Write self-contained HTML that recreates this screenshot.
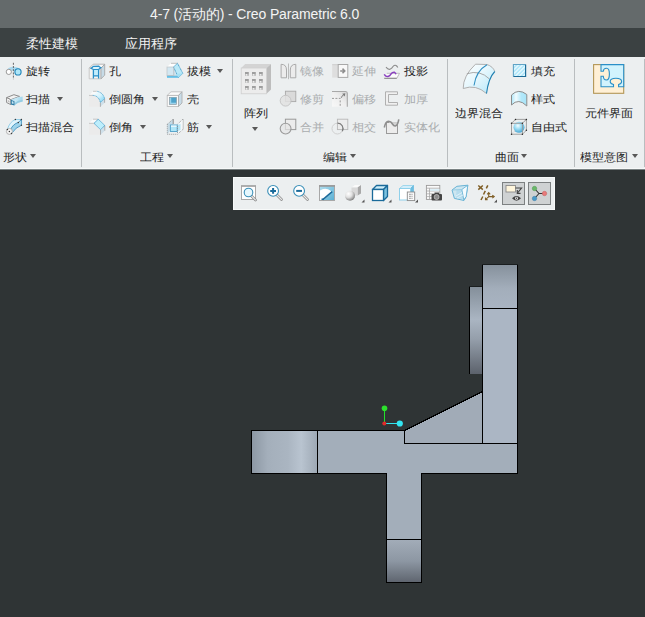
<!DOCTYPE html>
<html><head><meta charset="utf-8">
<style>
*{margin:0;padding:0;box-sizing:border-box}
html,body{width:645px;height:617px;overflow:hidden;background:#2f3435;font-family:"Liberation Sans",sans-serif;position:relative}
.a{position:absolute;white-space:nowrap}
#title{left:0;top:0;width:645px;height:28px;background:#646a6b}
#menu{left:0;top:28px;width:645px;height:29px;background:#3b4142}
#ribbon{left:0;top:57px;width:645px;height:112px;background:#eceff0}
.t{font-size:12px;color:#222;line-height:14px;font-weight:500;transform:scaleY(0.91);transform-origin:0 12.5px}
.d{color:#a9acae}
.sep{position:absolute;width:1px;background:#b9bdbf;top:59px;height:108px}
.arr{position:absolute;width:0;height:0;border-left:3.8px solid transparent;border-right:3.8px solid transparent;border-top:4.6px solid #585858}
.mt{font-size:13px;color:#f2f2f2;line-height:15px;font-weight:500}
</style></head><body>
<div class="a" id="title"></div>
<div class="a" style="left:150px;top:6px;font-size:14px;color:#f4f4f4;line-height:16px;letter-spacing:-0.13px">4-7 (活动的) - Creo Parametric 6.0</div>
<div class="a" id="menu"></div>
<div class="a mt" style="left:26px;top:36px">柔性建模</div>
<div class="a mt" style="left:125px;top:36px">应用程序</div>
<div class="a" id="ribbon"></div>
<div class="a" style="left:0;top:168px;width:645px;height:1px;background:#f6f8f8"></div>
<div class="a" style="left:0;top:169px;width:645px;height:1px;background:#7a8283"></div>

<!-- separators -->
<div class="sep" style="left:81px"></div>
<div class="sep" style="left:232px"></div>
<div class="sep" style="left:447px"></div>
<div class="sep" style="left:574px"></div>
<div class="sep" style="left:644px"></div>

<!-- 形状 -->
<div class="a t" style="left:26px;top:64px">旋转</div>
<div class="a t" style="left:26px;top:92px">扫描</div>
<div class="arr" style="left:57px;top:97px"></div>
<div class="a t" style="left:26px;top:120px">扫描混合</div>
<div class="a t" style="left:3px;top:150px">形状</div>
<div class="arr" style="left:30px;top:154px"></div>

<!-- 工程 -->
<div class="a t" style="left:109px;top:64px">孔</div>
<div class="a t" style="left:109px;top:92px">倒圆角</div>
<div class="arr" style="left:152px;top:97px"></div>
<div class="a t" style="left:109px;top:120px">倒角</div>
<div class="arr" style="left:140px;top:125px"></div>
<div class="a t" style="left:187px;top:64px">拔模</div>
<div class="arr" style="left:217px;top:69px"></div>
<div class="a t" style="left:187px;top:92px">壳</div>
<div class="a t" style="left:187px;top:120px">筋</div>
<div class="arr" style="left:206px;top:125px"></div>
<div class="a t" style="left:140px;top:150px">工程</div>
<div class="arr" style="left:167px;top:154px"></div>

<!-- 编辑 -->
<div class="a t" style="left:244px;top:106px">阵列</div>
<div class="arr" style="left:252px;top:127px"></div>
<div class="a t d" style="left:300px;top:64px">镜像</div>
<div class="a t d" style="left:300px;top:92px">修剪</div>
<div class="a t d" style="left:300px;top:120px">合并</div>
<div class="a t d" style="left:352px;top:64px">延伸</div>
<div class="a t d" style="left:352px;top:92px">偏移</div>
<div class="a t d" style="left:352px;top:120px">相交</div>
<div class="a t" style="left:404px;top:64px">投影</div>
<div class="a t d" style="left:404px;top:92px">加厚</div>
<div class="a t d" style="left:404px;top:120px">实体化</div>
<div class="a t" style="left:323px;top:150px">编辑</div>
<div class="arr" style="left:350px;top:154px"></div>

<!-- 曲面 -->
<div class="a t" style="left:455px;top:106px">边界混合</div>
<div class="a t" style="left:531px;top:64px">填充</div>
<div class="a t" style="left:531px;top:92px">样式</div>
<div class="a t" style="left:531px;top:120px">自由式</div>
<div class="a t" style="left:495px;top:150px">曲面</div>
<div class="arr" style="left:521px;top:154px"></div>

<!-- 模型意图 -->
<div class="a t" style="left:585px;top:106px">元件界面</div>
<div class="a t" style="left:580px;top:150px">模型意图</div>
<div class="arr" style="left:632px;top:154px"></div>


<!-- ICONS shape group -->
<svg class="a" style="left:2px;top:60px" width="24" height="24" viewBox="0 0 24 24">
<path d="M4.8 10.5 Q6 7 11.4 6.8 Q17 7 18.8 10.5 L17 12 Q11.4 9 6 12 Z" fill="#aad8ee"/>
<circle cx="6.8" cy="11.9" r="2.6" fill="#fff" stroke="#9a9a9a" stroke-width="1"/>
<circle cx="16" cy="11.9" r="3.1" fill="#aee6f8" stroke="#1f84b8" stroke-width="1.1"/>
<line x1="11.4" y1="2.8" x2="11.4" y2="19.2" stroke="#5a5a5a" stroke-width="0.9" stroke-dasharray="2,1.2"/>
</svg>
<svg class="a" style="left:2px;top:88px" width="24" height="24" viewBox="-0.6 -0.6 24 24">
<defs><linearGradient id="gSwp" x1="0" y1="0" x2="1" y2="0"><stop offset="0" stop-color="#c8ecf8"/><stop offset="1" stop-color="#a2d6ec"/></linearGradient></defs>
<polygon points="4,9 11.3,6.1 16.9,7.8 8.2,11.1" fill="#f2f2f2" stroke="#8c8c8c" stroke-width="1" stroke-linejoin="round"/>
<polygon points="4,9 8.2,11.1 8.2,16 4,13.9" fill="#fafafa" stroke="#8c8c8c" stroke-width="1" stroke-linejoin="round"/>
<polygon points="5.2,11.3 7,12.2 7,14.2 5.2,13.3" fill="#bdbdbd"/>
<path d="M11.9 12.6 Q15 9 17 8.5 Q19 8 20 7.8 L20 12.9 Q15 13.5 11.9 16.6 Z" fill="url(#gSwp)"/>
<path d="M11.9 14.5 Q15.5 11.5 20 11.2 L20 12.9 Q15 13.5 11.9 16.6 Z" fill="#94cbe2"/>
<path d="M8.2 11.1 L11.9 12.6 Q15 9 16.9 7.8" fill="#bfe6f6"/>
<polygon points="8.2,11.1 11.9,12.6 11.9,16.8 8.2,16" fill="#2c7ba6"/>
<polygon points="9.2,12.5 10.9,13.2 10.9,15.5 9.2,14.9" fill="#c8e6f2"/>
</svg>
<svg class="a" style="left:2px;top:116px" width="24" height="24" viewBox="0 0 24 24">
<path d="M5.4 13.4 Q7.5 6 13.4 3.5 L19.4 3.5 L16.3 6.5 Q11 8 8.6 13.6 Z" fill="#e2f5fc"/>
<path d="M5.4 13.4 Q7.5 6 13.4 3.5 L19.4 3.5" fill="none" stroke="#8ccbe6" stroke-width="0.9"/>
<polygon points="16.3,6.5 19.4,3.5 19.4,9.3" fill="#b8e3f4"/>
<path d="M8.6 13.6 Q11 8 16.3 6.5 L19.4 9.3 Q14 11 9.5 17.5 Z" fill="#9ed3ea"/>
<path d="M8.6 13.6 Q11 8 16.3 6.5 L19.4 3.5 V9.3 Q14 11 9.5 17.5" fill="none" stroke="#3f93c0" stroke-width="0.9"/>
<circle cx="7.4" cy="15.4" r="3" fill="#f6f6f6" stroke="#b4b4b4" stroke-width="1"/>
<g fill="#3a3a3a"><circle cx="13.4" cy="3.5" r="0.75"/><circle cx="19.4" cy="3.5" r="0.75"/><circle cx="19.4" cy="9.3" r="0.75"/><circle cx="16.3" cy="6.5" r="0.75"/><circle cx="5.4" cy="13.4" r="0.75"/><circle cx="9.5" cy="17.5" r="0.75"/><circle cx="7.4" cy="15.4" r="0.75"/></g>
</svg>
<!-- eng group -->
<svg class="a" style="left:86px;top:60px" width="24" height="24" viewBox="0 0 24 24">
<polygon points="3.2,8.2 7.2,4.2 18.7,4.2 15,8.2" fill="#fafafa" stroke="#b0b0b0" stroke-width="0.9"/>
<polygon points="3.2,8.2 15,8.2 15,18.8 3.2,18.8" fill="#f6f4f2" stroke="#c4c4c4" stroke-width="0.9"/>
<polygon points="15,8.2 18.7,4.2 18.7,15.2 15,18.8" fill="#c6dbe7" stroke="#a8a8a8" stroke-width="0.9"/>
<rect x="7.6" y="9.6" width="4.8" height="6.4" fill="#c4eefc"/>
<path d="M7.4 9.5 L7.4 18.6 M12.6 9.5 L12.6 18.6 M7.4 15.8 L12.6 15.8" stroke="#2a8fc8" stroke-width="1.3" fill="none"/>
<path d="M4.8 8.2 Q6.5 7.6 7.2 6.4 L13 6.2 Q13.6 7.4 15 7.6 L12.6 9.5 L7.4 9.5 Z" fill="#d8f4fd" stroke="#2a8fc8" stroke-width="1.2" stroke-linejoin="round"/>
</svg>
<svg class="a" style="left:86px;top:88px" width="24" height="24" viewBox="0 0 24 24">
<rect x="3" y="7.4" width="11.5" height="11.4" fill="#ebebeb"/>
<polygon points="3,7.4 7,3.3 13,3.3 7.5,7.4" fill="#fafafa"/>
<line x1="3" y1="7.4" x2="7" y2="7.4" stroke="#c0c0c0" stroke-width="0.9"/>
<line x1="7" y1="3.3" x2="11" y2="3.3" stroke="#c0c0c0" stroke-width="0.9"/>
<polygon points="14.4,14.5 18.6,10.6 18.6,14.8 14.4,18.8" fill="#cfe0ea"/>
<path d="M14.4 14.6 L14.4 18.8 M18.6 10.8 L18.6 14.8" stroke="#a8a8a8" stroke-width="0.9"/>
<defs><linearGradient id="gFil" x1="0" y1="0" x2="1" y2="1"><stop offset="0" stop-color="#ffffff"/><stop offset="0.5" stop-color="#d6f3fd"/><stop offset="1" stop-color="#6fcdf2"/></linearGradient></defs>
<path d="M6.8 7.4 Q12.6 7.6 14.4 14.5 L18.6 10.6 Q17 4.6 11 3.3 Z" fill="url(#gFil)"/>
<path d="M6.8 7.4 Q12.6 7.6 14.4 14.5 L18.6 10.6 Q17 4.6 11 3.3" fill="none" stroke="#3b9ac8" stroke-width="0.9" stroke-dasharray="1,0.6"/>
</svg>
<svg class="a" style="left:86px;top:116px" width="24" height="24" viewBox="0 0 24 24">
<rect x="3" y="7.3" width="11.5" height="11.5" fill="#ebebeb"/>
<polygon points="3,7.3 7,3.2 12.3,3.2 8,7.3" fill="#fafafa"/>
<line x1="3" y1="7.3" x2="8" y2="7.3" stroke="#c0c0c0" stroke-width="0.9"/>
<line x1="7" y1="3.2" x2="12" y2="3.2" stroke="#c0c0c0" stroke-width="0.9"/>
<polygon points="14.5,13.6 18.8,9.5 18.8,14.7 14.5,18.8" fill="#cfe0ea"/>
<path d="M14.5 13.8 L14.5 18.8 M18.8 9.6 L18.8 14.7" stroke="#a8a8a8" stroke-width="0.9"/>
<polygon points="8,7.3 12.3,3.2 18.8,9.5 14.5,13.6" fill="#bdeefc" stroke="#2f8fc2" stroke-width="0.9" stroke-dasharray="1,0.5"/>
</svg>
<svg class="a" style="left:163px;top:60px" width="24" height="24" viewBox="0 0 24 24">
<polygon points="4,7 8,3.3 14.5,3.3 10.5,7" fill="#ffffff"/>
<line x1="8" y1="3.3" x2="14.5" y2="3.3" stroke="#b8b8b8" stroke-width="0.9"/>
<rect x="4" y="7" width="10" height="9" fill="#d3e7f1" stroke="#c0c8cc" stroke-width="0.8"/>
<rect x="4" y="15.8" width="11.5" height="2" fill="#62bfe6"/>
<polygon points="10.5,7 14.5,3.3 19.8,13.3 15.5,17.6" fill="#b9e9f8" stroke="#2f8fc2" stroke-width="0.9" stroke-dasharray="1,0.5"/>
<polygon points="12.5,14 19.8,13.3 15.5,17.6" fill="#a4e0f4"/>
<path d="M10.8 7.5 V15.5 H4" stroke="#b8c0c4" stroke-width="0.9" fill="none"/>
</svg>
<svg class="a" style="left:163px;top:88px" width="24" height="24" viewBox="0 0 24 24">
<polygon points="4.2,7.4 8,3.8 19,3.8 15.5,7.4" fill="#fbfbfb" stroke="#b8b8b8" stroke-width="0.8"/>
<rect x="4.2" y="7.4" width="11.3" height="11" fill="#fafafa" stroke="#b8b8b8" stroke-width="0.8"/>
<polygon points="15.5,7.4 19,3.8 19,15 15.5,18.4" fill="#c8dce8" stroke="#a8a8a8" stroke-width="0.8"/>
<rect x="6.4" y="9.4" width="7" height="7" fill="#9bd3ec" stroke="#8a9aa2" stroke-width="0.7"/>
<rect x="8.2" y="9.7" width="5" height="5" fill="#4ea3cb"/>
</svg>
<svg class="a" style="left:163px;top:114px" width="24" height="24" viewBox="0 0 24 24">
<polygon points="4.3,10.3 10.2,5 10.2,10 5.2,19.5 4.3,20" fill="#c6dbe6"/>
<path d="M10.2 5 V10" stroke="#8a8a8a" stroke-width="1"/>
<path d="M19.8 5 V15.5" stroke="#8a8a8a" stroke-width="1"/>
<polygon points="14.5,10.3 19.8,5.2 19.8,15.5 14.5,20.3" fill="#f4f8fa"/>
<g stroke="#8a8a8a" stroke-width="0.9" fill="none" stroke-dasharray="0.9,1.1">
<path d="M4.3 10.3 L10.2 5"/><path d="M4.3 10.3 V20.3 H14.5"/><path d="M14.5 10.3 L19.8 5.2"/><path d="M14.5 20.3 L19.8 15.5"/>
</g>
<polygon points="14,11 17.5,10 17.5,16 14,17.5" fill="#b6e4f4"/>
<rect x="7.4" y="11" width="6.8" height="6.5" fill="#aee6f8" stroke="#5aa6cc" stroke-width="1"/>
<rect x="8" y="11.5" width="5.6" height="1.3" fill="#f2fbff"/>
<path d="M14.5 12 V20" stroke="#8a8a8a" stroke-width="0.9" stroke-dasharray="0.9,1.1"/>
</svg>
<!-- edit group -->
<svg class="a" style="left:238px;top:60px" width="36" height="36" viewBox="0 0 36 36">
<polygon points="3.2,8 7.2,4.1 33,4.1 28.5,8" fill="#d4d4d4"/>
<polygon points="28.5,8 33,4.1 33,29.6 28.5,33.8" fill="#bdbdbd"/>
<rect x="3.2" y="8" width="25.3" height="25.8" fill="#ececec" stroke="#cfcfcf" stroke-width="0.8"/>
<rect x="7" y="12" width="3.8" height="3.6" fill="#9e9e9e"/><rect x="7" y="14.2" width="3.8" height="1.4" fill="#c4c4c4"/><rect x="7.9" y="14.2" width="1.3" height="1.3" fill="#f8f8f8"/>
<rect x="7" y="19" width="3.8" height="3.6" fill="#9e9e9e"/><rect x="7" y="21.2" width="3.8" height="1.4" fill="#c4c4c4"/><rect x="7.9" y="21.2" width="1.3" height="1.3" fill="#f8f8f8"/>
<rect x="7" y="26" width="3.8" height="3.6" fill="#9e9e9e"/><rect x="7" y="28.2" width="3.8" height="1.4" fill="#c4c4c4"/><rect x="7.9" y="28.2" width="1.3" height="1.3" fill="#f8f8f8"/>
<rect x="14" y="12" width="3.8" height="3.6" fill="#9e9e9e"/><rect x="14" y="14.2" width="3.8" height="1.4" fill="#c4c4c4"/><rect x="14.9" y="14.2" width="1.3" height="1.3" fill="#f8f8f8"/>
<rect x="14" y="19" width="3.8" height="3.6" fill="#9e9e9e"/><rect x="14" y="21.2" width="3.8" height="1.4" fill="#c4c4c4"/><rect x="14.9" y="21.2" width="1.3" height="1.3" fill="#f8f8f8"/>
<rect x="14" y="26" width="3.8" height="3.6" fill="#9e9e9e"/><rect x="14" y="28.2" width="3.8" height="1.4" fill="#c4c4c4"/><rect x="14.9" y="28.2" width="1.3" height="1.3" fill="#f8f8f8"/>
<rect x="21" y="12" width="3.8" height="3.6" fill="#9e9e9e"/><rect x="21" y="14.2" width="3.8" height="1.4" fill="#c4c4c4"/><rect x="21.9" y="14.2" width="1.3" height="1.3" fill="#f8f8f8"/>
<rect x="21" y="19" width="3.8" height="3.6" fill="#9e9e9e"/><rect x="21" y="21.2" width="3.8" height="1.4" fill="#c4c4c4"/><rect x="21.9" y="21.2" width="1.3" height="1.3" fill="#f8f8f8"/>
<rect x="21" y="26" width="3.8" height="3.6" fill="#9e9e9e"/><rect x="21" y="28.2" width="3.8" height="1.4" fill="#c4c4c4"/><rect x="21.9" y="28.2" width="1.3" height="1.3" fill="#f8f8f8"/>
</svg>
<svg class="a" style="left:277px;top:60px" width="24" height="78" viewBox="0 0 24 78">
<path d="M4.1 17.8 V4.3 Q9.5 4.3 9.5 10 V17.8 Z" fill="#ececec" stroke="#aaaaaa" stroke-width="1"/>
<path d="M18.8 17.8 V4.3 Q13.3 4.3 13.3 10 V17.8 Z" fill="#ececec" stroke="#aaaaaa" stroke-width="1"/>
<line x1="11.5" y1="3.5" x2="11.5" y2="19.2" stroke="#b4b4b4" stroke-width="0.9"/>
<rect x="8.4" y="31.2" width="10.4" height="10.4" fill="#dadada" stroke="#a8a8a8" stroke-width="0.9"/>
<circle cx="8.6" cy="40.7" r="5.4" fill="#e2e2e2" fill-opacity="0.85" stroke="#c2c2c2" stroke-width="0.9"/>
<rect x="8.4" y="59.2" width="10.4" height="10.4" fill="#ececec" stroke="#999" stroke-width="1"/>
<circle cx="8.6" cy="68.6" r="5.4" fill="#e6e6e6" fill-opacity="0.7" stroke="#9c9c9c" stroke-width="1.1"/>
</svg>
<svg class="a" style="left:329px;top:60px" width="24" height="78" viewBox="0 0 24 78">
<rect x="3.2" y="4.2" width="6" height="13.4" fill="#dedede"/>
<rect x="3.2" y="4.2" width="6" height="1" fill="#cfcfcf"/>
<rect x="9.2" y="4.5" width="9.6" height="12.9" fill="#f8f8f8" stroke="#a8a8a8" stroke-width="1"/>
<path d="M11.2 10.9 H15 M13.5 8.6 L15.8 10.9 L13.5 13.2" stroke="#8e8e8e" stroke-width="1.5" fill="none"/>
<defs><linearGradient id="gOff" x1="0" y1="1" x2="1" y2="0"><stop offset="0" stop-color="#f8f8f8"/><stop offset="0.5" stop-color="#eeeeee"/><stop offset="1" stop-color="#d2d2d2"/></linearGradient></defs>
<path d="M3 31 H16.5 Q18.8 31 18.8 33.5 V46.8 H3 Z" fill="url(#gOff)"/>
<path d="M3 31.5 H16.5 Q18.3 31.5 18.3 33.5 V46.8" fill="none" stroke="#a8a8a8" stroke-width="1.1"/>
<path d="M3 38.4 H11.2 V46.8" stroke="#9a9a9a" stroke-width="1" fill="none" stroke-dasharray="2,1.4"/>
<path d="M12 37.5 L15.6 34" stroke="#7a7a7a" stroke-width="1.1" stroke-dasharray="1.2,0.6"/>
<polygon points="13.2,33.8 16.3,33.3 15.8,36.4" fill="#7a7a7a"/>
<rect x="8.4" y="59.2" width="10.4" height="10.4" fill="#ececec" stroke="#b8b8b8" stroke-width="0.9"/>
<circle cx="8.4" cy="68.6" r="5.4" fill="none" stroke="#cccccc" stroke-width="0.9"/>
<path d="M8.4 63.2 A5.4 5.4 0 0 1 13.3 71.3" fill="none" stroke="#7c7c7c" stroke-width="1.2"/>
</svg>
<svg class="a" style="left:381px;top:60px" width="24" height="78" viewBox="0 0 24 78">
<path d="M5 7.2 Q7 9.8 9 9.3 Q11 8.5 12 6.5 Q13.5 4.8 15 5.5 Q16 6 16.8 7.5" fill="none" stroke="#8c8c8c" stroke-width="1.1"/>
<polygon points="5.8,13.3 18.5,13.3 15.8,18.3 3.2,18.3" fill="#fbfbfb"/>
<path d="M5.8 13.3 H18.5 L15.8 18.3" fill="none" stroke="#b0b0b0" stroke-width="0.8"/>
<path d="M3.2 18.3 H15.8" stroke="#8a8a8a" stroke-width="1.2"/>
<path d="M3.2 14.3 Q5 17 7 16.5 Q9 16 10 14 Q11.5 12 13.5 12.3 Q14.5 12.8 15 14.2" fill="none" stroke="#8a3fc0" stroke-width="1.5"/>
<path d="M4.5 31.8 L16.5 31.8 L16.5 34.5 L7.5 34.5 L7.5 42.5 L16.5 42.5 L16.5 45.2 L4.5 45.2 Z" fill="#f0f0f0" stroke="#a8a8a8" stroke-width="0.9"/>
<rect x="5.5" y="62.5" width="11" height="11" fill="#ececec" stroke="#9a9a9a" stroke-width="1"/>
<path d="M8 62.5 H16.5" stroke="#c8c8c8" stroke-width="1"/>
<path d="M11 62.5 Q13 65.5 15 65 Q16.5 64 16.5 62.5 Z" fill="#d4d4d4"/>
<path d="M3.3 67.5 Q4.5 61.5 7.5 61.3 Q10 61.3 11.5 64 Q13 66.5 14.8 65.8 Q16.8 65 17.8 59.3" fill="none" stroke="#8e8e8e" stroke-width="1.6"/>
</svg>
<!-- surface group -->
<svg class="a" style="left:455px;top:58px" width="50" height="42" viewBox="0 0 50 42">
<defs><linearGradient id="gBnd" x1="0" y1="0" x2="1" y2="1"><stop offset="0" stop-color="#ffffff"/><stop offset="0.45" stop-color="#e6f7fd"/><stop offset="1" stop-color="#b2e6f9"/></linearGradient></defs>
<path d="M8.2 30.5 Q8 18 20.5 6.2 L32 6.5 Q38 8.5 39.8 13.5 Q33.5 20 31.5 35.5 Q21 26 8.2 30.5 Z" fill="url(#gBnd)"/>
<path d="M8.2 30.5 Q8 18 20.5 6.2 L32 6.5 Q38 8.5 39.8 13.5" fill="none" stroke="#a8a8a8" stroke-width="0.9"/>
<path d="M8.2 30.5 Q21 26 31.5 35.5" fill="none" stroke="#a8a8a8" stroke-width="0.9"/>
<path d="M11.8 15.8 Q25 11.5 34.5 21" fill="none" stroke="#a0a0a0" stroke-width="0.9"/>
<path d="M19 27.5 Q21 13 32 6.8" fill="none" stroke="#2f8fc2" stroke-width="1.1"/>
<path d="M31.5 35.5 Q33.5 20 39.8 13.5" fill="none" stroke="#1f7fb0" stroke-width="1.1"/>
</svg>
<svg class="a" style="left:507px;top:60px" width="24" height="78" viewBox="0 0 24 78">
<defs><pattern id="stripe" width="2.8" height="2.8" patternUnits="userSpaceOnUse" patternTransform="rotate(45)"><rect width="2.8" height="2.8" fill="#b2e8fa"/><rect width="1" height="2.8" fill="#f6fcff"/></pattern>
<linearGradient id="gSty" x1="0" y1="0" x2="1" y2="0"><stop offset="0" stop-color="#aee6f8"/><stop offset="0.3" stop-color="#f2fcff"/><stop offset="0.65" stop-color="#b2e8fa"/><stop offset="1" stop-color="#a8e4f8"/></linearGradient>
<radialGradient id="gBall" cx="0.4" cy="0.35" r="0.7"><stop offset="0" stop-color="#f4fcff"/><stop offset="0.45" stop-color="#9adcf4"/><stop offset="1" stop-color="#3f9fcc"/></radialGradient></defs>
<rect x="6.4" y="4.5" width="12.2" height="12" fill="url(#stripe)"/>
<path d="M6.4 16.5 V4.5 H18.6" fill="none" stroke="#5fa3c6" stroke-width="1.1"/>
<path d="M18.6 4.5 V16.5 H6.4" fill="none" stroke="#1e6c98" stroke-width="1.2"/>
<path d="M4.5 45 L4.5 35 Q11.5 28 19.8 34.5 L19.8 46 Q11.5 37.5 4.5 45 Z" fill="url(#gSty)" stroke="#8c8c8c" stroke-width="1"/>
<circle cx="12" cy="67.3" r="5.5" fill="url(#gBall)"/>
<g stroke="#999" stroke-width="0.9" fill="none">
<polyline points="4.5,63.3 8.5,59.4 19.4,59.4 15.4,63.3"/>
<polyline points="19.4,59.4 19.4,70.3 15.4,74.2"/>
<rect x="4.5" y="63.3" width="10.9" height="10.9"/>
</g>
<path d="M5.5 73 L8.5 70.3" stroke="#aaa" stroke-width="0.7" stroke-dasharray="1,1"/>
<path d="M15.4 63.3 L19.4 59.4" stroke="#aaa" stroke-width="0.7" stroke-dasharray="1,1"/>
<g fill="#2a2a2a"><circle cx="4.5" cy="63.3" r="0.75"/><circle cx="15.4" cy="63.3" r="0.75"/><circle cx="4.5" cy="74.2" r="0.75"/><circle cx="15.4" cy="74.2" r="0.75"/><circle cx="8.5" cy="59.4" r="0.75"/><circle cx="19.4" cy="59.4" r="0.75"/><circle cx="19.4" cy="70.3" r="0.75"/></g>
</svg>
<svg class="a" style="left:588px;top:60px" width="40" height="38" viewBox="0 0 40 38">
<rect x="5.6" y="4.6" width="30.1" height="28.7" fill="#fff0d6" stroke="#b39656" stroke-width="1.1"/>
<path d="M13 4.6 L35.7 4.6 L35.7 26.8 L30.6 26.8 L30.6 24.5 Q33.6 23.5 33.6 21.4 Q33.6 18.3 27.9 18.3 Q22.2 18.3 22.2 21.4 Q22.2 23.5 25.5 24.5 L25.5 26.8 L13 26.8 L13 16.3 L15.3 16.3 Q15.5 20 18.5 20 Q21.4 20 21.4 14 Q21.4 8.2 18.5 8.2 Q15.5 8.2 15.3 11.2 L13 11.2 Z" fill="#d2f3fd" stroke="#2a8fc8" stroke-width="1.1"/>
</svg>

<!-- view toolbar -->
<div class="a" style="left:233px;top:177px;width:322px;height:33px;background:#eceff0;border:1px solid #f7f9f9"></div>
<div class="a" style="left:502px;top:182px;width:23px;height:23px;background:#cfd2d3;border:1px solid #7d8182"></div>
<div class="a" style="left:528px;top:182px;width:23px;height:23px;background:#cfd2d3;border:1px solid #7d8182"></div>


<!-- toolbar icons -->
<svg class="a" style="left:233px;top:177px" width="322" height="33" viewBox="233 177 322 33">
<defs>
<linearGradient id="gRep" x1="0" y1="0" x2="1" y2="1"><stop offset="0" stop-color="#b4e0f0"/><stop offset="1" stop-color="#58aed2"/></linearGradient>
<radialGradient id="gSph" cx="0.35" cy="0.3" r="0.8"><stop offset="0" stop-color="#ffffff"/><stop offset="0.45" stop-color="#e0e0e0"/><stop offset="0.85" stop-color="#8c8c8c"/><stop offset="1" stop-color="#6a6a6a"/></radialGradient>
<linearGradient id="gGlass" x1="0" y1="0" x2="1" y2="1"><stop offset="0" stop-color="#bfe6f4"/><stop offset="1" stop-color="#5fb0d6"/></linearGradient>
</defs>
<!-- refit -->
<rect x="241.5" y="186" width="14" height="13.5" fill="#fff" stroke="#a8a8a8" stroke-width="1"/>
<rect x="241" y="185.3" width="15" height="1.4" fill="#a0a0a0"/>
<line x1="251.5" y1="196" x2="255.5" y2="200" stroke="#8c8c8c" stroke-width="2.6" stroke-linecap="round"/>
<line x1="251.5" y1="196" x2="255.5" y2="200" stroke="#e8e8e8" stroke-width="1.1" stroke-linecap="round"/>
<circle cx="248.5" cy="192.5" r="4.3" fill="#e6f7fd" stroke="#3a8fb8" stroke-width="1.1"/>
<!-- zoom in -->
<line x1="277" y1="195" x2="281.5" y2="199.5" stroke="#8c8c8c" stroke-width="2.6" stroke-linecap="round"/>
<line x1="277" y1="195" x2="281.5" y2="199.5" stroke="#e8e8e8" stroke-width="1.1" stroke-linecap="round"/>
<circle cx="273.1" cy="190.9" r="5.4" fill="#fff" stroke="#3a8fb8" stroke-width="1.1"/>
<path d="M273.1 188 V193.8 M270.2 190.9 H276" stroke="#1a6a9a" stroke-width="2"/>
<!-- zoom out -->
<line x1="303" y1="195" x2="307.5" y2="199.5" stroke="#8c8c8c" stroke-width="2.6" stroke-linecap="round"/>
<line x1="303" y1="195" x2="307.5" y2="199.5" stroke="#e8e8e8" stroke-width="1.1" stroke-linecap="round"/>
<circle cx="299.1" cy="190.9" r="5.4" fill="#fff" stroke="#3a8fb8" stroke-width="1.1"/>
<path d="M296.2 190.9 H302" stroke="#1a6a9a" stroke-width="2"/>
<!-- repaint -->
<rect x="319.5" y="185.5" width="15" height="15" fill="url(#gRep)" stroke="#a8a8a8" stroke-width="1"/>
<rect x="319" y="185.2" width="16" height="1.6" fill="#9a9a9a"/>
<path d="M320 200 V190.5 Q323.5 188 328 189.3 Q330.5 190.3 332 192 L323.5 200 Z" fill="#fff"/>
<line x1="322.8" y1="199.6" x2="332.2" y2="191.6" stroke="#1a6a9a" stroke-width="1.5"/>
<rect x="321.5" y="198.5" width="2.5" height="1.5" fill="#1a6a9a"/>
<!-- shading -->
<polygon points="351.5,187.5 355,185 361,185 357.5,187.5" fill="#fafafa"/>
<polygon points="357.5,187.5 361,185 361,193.5 357.5,195.5" fill="#a8a8a8"/>
<rect x="351.5" y="187.5" width="6" height="8" fill="#d8d8d8"/>
<circle cx="350" cy="195.8" r="5" fill="url(#gSph)"/>
<polygon points="361.5,202.5 364.5,199.5 364.5,202.5" fill="#555"/>
<!-- cube -->
<polygon points="372.5,189.5 376.5,185.5 387.5,185.5 383.5,189.5" fill="#cfeffa" stroke="#1a6a9a" stroke-width="1.3" stroke-linejoin="round"/>
<polygon points="383.5,189.5 387.5,185.5 387.5,196.5 383.5,200.5" fill="#7cc2e0" stroke="#1a6a9a" stroke-width="1.3" stroke-linejoin="round"/>
<rect x="372.5" y="189.5" width="11" height="11" fill="#fff" stroke="#1a6a9a" stroke-width="1.3"/>
<polygon points="388.5,202.5 391.5,199.5 391.5,202.5" fill="#555"/>
<!-- saved views -->
<polygon points="399.5,188.5 403,185.5 413.5,185.5 410.5,188.5" fill="#d4eefa" stroke="#8fd0ea" stroke-width="0.8"/>
<polygon points="410.5,188.5 413.5,185.5 413.5,197 410.5,200" fill="#6cbde0" stroke="#6cbde0" stroke-width="0.8"/>
<rect x="399.5" y="188.5" width="11" height="11.5" fill="#fff" stroke="#8fd0ea" stroke-width="1"/>
<rect x="407.3" y="192" width="7.4" height="8.6" fill="#fbfbfb" stroke="#8a8a8a" stroke-width="0.9"/>
<path d="M409 194.3 H413 M409 196.3 H413 M409 198.3 H413" stroke="#666" stroke-width="0.8" stroke-dasharray="0.8,0.5"/>
<polygon points="415,202.5 418,199.5 418,202.5" fill="#555"/>
<!-- camera table -->
<rect x="426.4" y="185.4" width="13.4" height="14" fill="#fafafa" stroke="#9a9a9a" stroke-width="0.9"/>
<path d="M426.4 188.2 H439.8 M426.4 191 H439.8 M426.4 193.8 H439.8 M426.4 196.6 H433 M429.5 188.2 V199.4" stroke="#a8a8a8" stroke-width="0.8"/>
<path d="M430 190 H439.5" stroke="#d6eef8" stroke-width="1.6"/>
<rect x="431.5" y="194" width="10.5" height="6.5" rx="1" fill="#444"/>
<rect x="434.5" y="192.5" width="4.5" height="2" fill="#444"/>
<circle cx="436.6" cy="197" r="2.5" fill="#8a8a8a" stroke="#d8d8d8" stroke-width="0.6"/>
<!-- glass box -->
<polygon points="452,190 456.9,186.3 467.8,185.2 466.1,196.7 464,200.5 454.4,198.4" fill="#cde6f0" stroke="#69b3d5" stroke-width="1"/>
<polygon points="456.5,190 461.8,189.5 463.8,199.5 456,197.5" fill="#b6dced"/>
<polygon points="461.8,189.5 467.8,185.2 466.1,196.7 463.8,199.8" fill="#f4fbfe" stroke="#69b3d5" stroke-width="0.9"/>
<path d="M452.5 190 L461.8 189.5" stroke="#8cc6e0" stroke-width="0.8"/>
<path d="M456 196 L462 192.5 M457 198 L463 195" stroke="#e8f6fb" stroke-width="0.8"/>
<!-- datum -->
<g stroke="#7f5e26" stroke-width="1.5" fill="none">
<path d="M478.3 185.5 L482.8 189.6 M482.8 185.5 L478.3 189.6"/>
<path d="M487.8 185.3 L486.3 188.3"/>
<path d="M485.3 190.8 L483.5 194.5"/>
<path d="M482.8 196.5 L481 200"/>
</g>
<g stroke="#7f5e26" stroke-width="1.1" fill="none">
<path d="M488.7 193 V196.6 H493.5"/>
<path d="M487.2 194.3 L488.7 192.5 L490.2 194.3"/>
<path d="M492.3 195.1 L494.2 196.6 L492.3 198.1"/>
<path d="M488.7 196.6 L485.8 199.3"/>
<path d="M485.5 197.5 V199.6 H487.6"/>
</g>
<polygon points="494,202.5 497,199.5 497,202.5" fill="#555"/>
<!-- selected 1 -->
<rect x="506" y="185.5" width="9.5" height="6.5" fill="#fff6dc" stroke="#8a8a8a" stroke-width="0.9"/>
<path d="M515.5 188 H521.5 L517.5 193" fill="none" stroke="#444" stroke-width="1.2"/>
<path d="M517.3 190 V193.3 H520.5" fill="none" stroke="#444" stroke-width="1.2"/>
<path d="M512 198.3 Q516.5 193.5 521 198.3 Q516.5 203 512 198.3 Z" fill="#444"/>
<circle cx="516.5" cy="198.3" r="1.5" fill="#e8e8e8"/>
<circle cx="516.5" cy="198.3" r="0.7" fill="#444"/>
<!-- selected 2 -->
<path d="M534.5 188.5 L539 193.5 L544.5 193.5 M539 193.5 L534.5 198.5" fill="none" stroke="#333" stroke-width="1.1"/>
<circle cx="534.5" cy="188.5" r="2.2" fill="#6ab86a" stroke="#4a944a" stroke-width="0.5"/>
<circle cx="544.5" cy="193.5" r="2.2" fill="#e87a7a" stroke="#c25a5a" stroke-width="0.5"/>
<circle cx="534.5" cy="198.5" r="2.2" fill="#4a9ac8" stroke="#3a7aa8" stroke-width="0.5"/>
</svg>

<!-- model -->
<svg class="a" style="left:0;top:0" width="645" height="617" viewBox="0 0 645 617">
<defs>
<linearGradient id="gTop" x1="0" y1="0" x2="0" y2="1"><stop offset="0" stop-color="#85909b"/><stop offset="0.55" stop-color="#a3aebb"/><stop offset="1" stop-color="#a9b4c2"/></linearGradient>
<linearGradient id="gSide" x1="0" y1="0" x2="0" y2="1"><stop offset="0" stop-color="#838e99"/><stop offset="0.38" stop-color="#aab5c2"/><stop offset="0.6" stop-color="#959fab"/><stop offset="1" stop-color="#5c626c"/></linearGradient>
<linearGradient id="gLeft" x1="0" y1="0" x2="1" y2="0"><stop offset="0" stop-color="#8b96a2"/><stop offset="0.25" stop-color="#a4afbb"/><stop offset="0.55" stop-color="#aab5c1"/><stop offset="0.75" stop-color="#b9c4d0"/><stop offset="1" stop-color="#9ca7b3"/></linearGradient>
<linearGradient id="gBot" x1="0" y1="0" x2="0" y2="1"><stop offset="0" stop-color="#a3adb9"/><stop offset="0.5" stop-color="#8d97a3"/><stop offset="1" stop-color="#5d636d"/></linearGradient>
</defs>
<g shape-rendering="crispEdges">
<rect x="482" y="264" width="36" height="45" fill="url(#gTop)"/>
<rect x="482" y="308" width="36" height="136" fill="#abb6c4"/>
<rect x="469" y="286" width="14" height="88" fill="url(#gSide)"/>
<rect x="251" y="430" width="67" height="44" fill="url(#gLeft)"/>
<polygon points="317,430 405,430 405,443 518,443 518,474 421,474 421,474 317,474" fill="#a3aeba"/>
<polygon points="404,430 482,391 482,444 404,444" fill="#a1abb7"/>
<rect x="386" y="473" width="36" height="67" fill="#a3aeba"/>
<rect x="386" y="539" width="36" height="44" fill="url(#gBot)"/>
<g fill="#000">
<rect x="482" y="264" width="1" height="180"/>
<rect x="517" y="264" width="1" height="210"/>
<rect x="482" y="308" width="36" height="1"/>
<rect x="469" y="286" width="1" height="88"/>
<rect x="251" y="430" width="154" height="1"/>
<rect x="251" y="430" width="1" height="44"/>
<rect x="251" y="473" width="136" height="1"/>
<rect x="421" y="473" width="97" height="1"/>
<rect x="317" y="430" width="1" height="44"/>
<rect x="404" y="430" width="1" height="14"/>
<rect x="404" y="443" width="114" height="1"/>
<rect x="386" y="473" width="1" height="110"/>
<rect x="421" y="473" width="1" height="110"/>
<rect x="386" y="539" width="36" height="1"/>
<rect x="386" y="582" width="36" height="1"/>
</g>
</g>
<rect x="482" y="264" width="36" height="1" fill="#1a1e1f" shape-rendering="crispEdges"/>
<rect x="469" y="286" width="13" height="1" fill="#1a1e1f" shape-rendering="crispEdges"/>
<line x1="404.5" y1="430.5" x2="482.5" y2="391.5" stroke="#000" stroke-width="1.1" shape-rendering="crispEdges"/>
<line x1="384.5" y1="408" x2="384.5" y2="423.5" stroke="#22e02a" stroke-width="1"/>
<line x1="384.5" y1="423.5" x2="400" y2="423.5" stroke="#2ee6f0" stroke-width="1"/>
<circle cx="384.5" cy="408.3" r="2.8" fill="#2ce02c"/>
<circle cx="384.3" cy="423.5" r="2" fill="#e02a2a"/>
<circle cx="399.8" cy="423.5" r="3.1" fill="#33e6f2"/>
</svg>
</body></html>
